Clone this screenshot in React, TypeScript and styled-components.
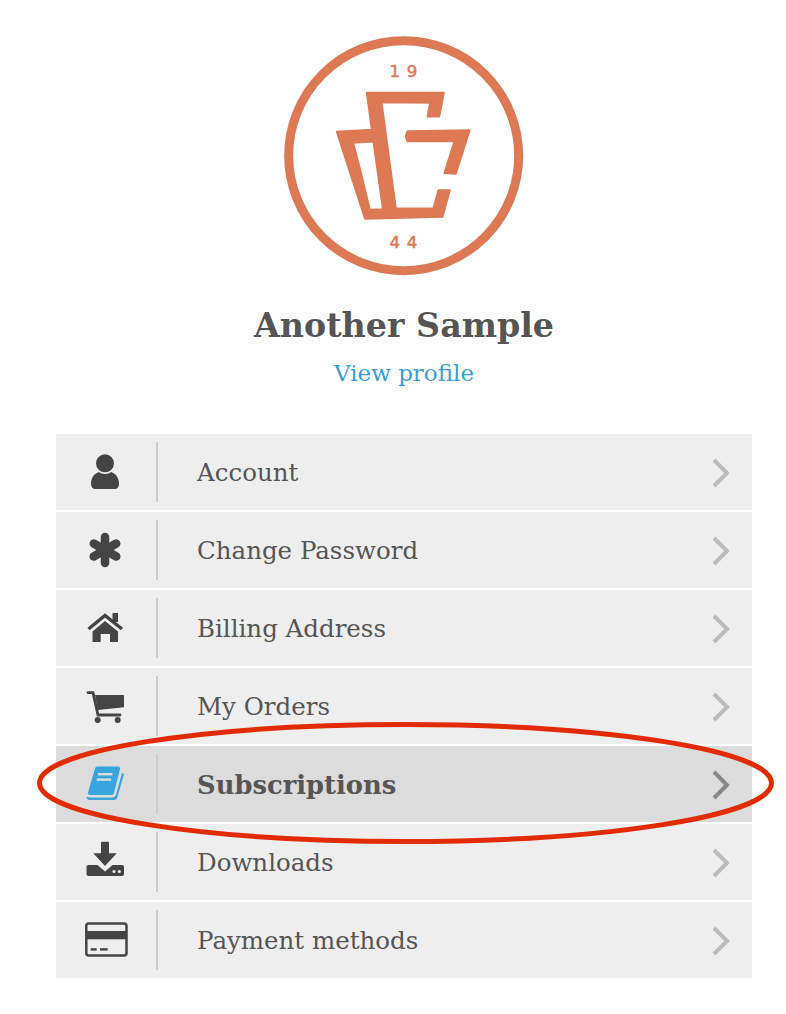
import React from 'react'
import styled, { createGlobalStyle } from 'styled-components'

const GlobalStyle = createGlobalStyle`
  html, body {
    margin: 0;
    padding: 0;
    background: #fff;
    overflow-x: hidden;
  }
`

const Page = styled.div`
  position: relative;
  width: 786px;
  height: 1014px;
  overflow: hidden;
  font-family: "DejaVu Serif", Georgia, serif;
  color: #555;
`

const Content = styled.div`
  width: 696px;
  margin-left: 56px;
  padding-top: 25px;
  display: flex;
  flex-direction: column;
  align-items: center;
`

const LogoBox = styled.svg`
  display: block;
  width: 270px;
  height: 260px;
`

const Name = styled.h1`
  margin: 18px 0 0;
  font-size: 33.3px;
  line-height: 46px;
  font-weight: 700;
  color: #555;
`

const ProfileLink = styled.a`
  margin-top: 7px;
  font-size: 23px;
  line-height: 34px;
  color: #3a9fd8;
  text-decoration: none;
`

const Menu = styled.ul`
  list-style: none;
  margin: 44px 0 0;
  padding: 0;
  width: 100%;
  display: flex;
  flex-direction: column;
  gap: 2px;
`

const Row = styled.li<{ $active?: boolean }>`
  height: 76px;
  display: flex;
  align-items: center;
  background: ${p => (p.$active ? '#dcdcdc' : '#eee')};
  padding-right: 22px;
`

const IconCell = styled.div`
  width: 100px;
  height: 60px;
  flex: none;
  display: flex;
  align-items: center;
  justify-content: center;
  border-right: 2px solid #ccc;
`

const Icon = styled.svg<{ $color?: string }>`
  width: 48px;
  height: 48px;
  display: block;
  fill: ${p => p.$color || '#444'};
`

const Label = styled.span<{ $active?: boolean }>`
  flex: 1;
  margin-left: 39px;
  padding-top: 1px;
  font-size: ${p => (p.$active ? 25.8 : 24.5)}px;
  font-weight: ${p => (p.$active ? 700 : 400)};
  color: #555;
`

const Chevron = styled.svg<{ $active?: boolean }>`
  width: 18px;
  height: 30px;
  margin-top: 2px;
  display: block;
  fill: none;
  stroke: ${p => (p.$active ? '#888' : '#bbb')};
  stroke-width: 4;
`

const Ring = styled.svg`
  position: absolute;
  left: 0;
  top: 0;
  width: 786px;
  height: 1014px;
  pointer-events: none;
`

const LogoText = styled.text`
  font-family: "DejaVu Sans", Arial, sans-serif;
  font-size: 50px;
  letter-spacing: 20px;
  stroke: #dd7954;
  stroke-width: 1.5;
  fill: #dd7954;
  text-anchor: middle;
`

const Logo = () => (
  <LogoBox viewBox="-3 0 810 780">
    <circle cx="401" cy="392" r="345" fill="none" stroke="#dd7954" strokeWidth="27" />
    <path
      fill="#dd7954"
      stroke="#dd7954"
      strokeWidth="5"
      strokeLinejoin="round"
      fillRule="evenodd"
      d="M290 203 L522 203 L508 275 L472 275 L480 234 L335 232 L378 550 L490 550 L505 495 L540 495 L518 576 L285 582 L200 320 L305 314 Z M250 354 L310 350 L338 552 L300 554 L270 430 Z"
    />
    <path
      fill="#dd7954"
      stroke="#dd7954"
      strokeWidth="4"
      strokeLinejoin="round"
      d="M412 318 L600 315 L558 447 L522 445 L552 350 L412 350 Q402 334 412 318 Z"
    />
    <LogoText x="410" y="155">19</LogoText>
    <LogoText x="410" y="670">44</LogoText>
  </LogoBox>
)

const UserIcon = () => (
  <Icon viewBox="0 0 48 48">
    <circle cx="23" cy="15.3" r="9" />
    <path d="M9 36C9 30 12 25.5 17 24C19 26.5 27 26.5 29 24C34 25.5 37 30 37 36C37 39 35 41 33 41H13C11 41 9 39 9 36Z" />
  </Icon>
)

const AsteriskIcon = () => (
  <Icon viewBox="0 0 48 48">
    <g stroke="#444" strokeWidth="8.5" strokeLinecap="round">
      <path d="M23 11V37" />
      <path d="M23 11V37" transform="rotate(60 23 24)" />
      <path d="M23 11V37" transform="rotate(-60 23 24)" />
    </g>
  </Icon>
)

const HomeIcon = () => (
  <Icon viewBox="0 0 48 48">
    <path d="M6.5 25L23 11.5L40 25" fill="none" stroke="#444" strokeWidth="3.4" />
    <rect x="30.5" y="9" width="5.5" height="9" />
    <path d="M10.5 27.5L23 17L36 27.5V38H28V30H18.7V38H10.5Z" />
  </Icon>
)

const CartIcon = () => (
  <Icon viewBox="0 0 48 48">
    <path d="M6 10.7H11L16 33H38" fill="none" stroke="#444" strokeWidth="2.8" strokeLinecap="round" />
    <path d="M13 13H41C41.6 13 42 13.4 42 14V25.3L15.8 28Z" />
    <circle cx="15.7" cy="38" r="3" />
    <circle cx="35.7" cy="38" r="3" />
  </Icon>
)

const BookIcon = () => (
  <Icon viewBox="0 0 48 48" $color="#39a4dc">
    <path d="M15.5 6.5H36C37.6 6.5 38.4 7.6 38 9L32 33C31.6 34.4 30.6 35 29 35H8C6.4 35 5.6 33.9 6 32.5L13 8.5C13.4 7.2 14.2 6.5 15.5 6.5Z" />
    <path d="M42 14L35.5 37C35 38.8 33.8 40 32 40H7.5C5.8 40 4.6 39 4.4 36.8C5.4 37.3 6.6 37.4 8 37.4H30.5C32.4 37.4 33.4 36.4 34 34.8L40 13Z" />
    <rect x="16" y="13" width="14.5" height="2.4" fill="#dcdcdc" />
    <rect x="14.7" y="18.4" width="14.5" height="2.4" fill="#dcdcdc" />
  </Icon>
)

const DownloadIcon = () => (
  <Icon viewBox="0 0 48 48">
    <path d="M19 5C19 4.2 19.6 3.7 20.4 3.7H25.6C26.4 3.7 27 4.2 27 5V15.3H34.7L23 28L11.3 15.3H19Z" />
    <path d="M6.5 27H15.5L23 33.5L30.5 27H40C41.2 27 42 27.8 42 29V36C42 37.2 41.2 38 40 38H6.5C5.3 38 4.5 37.2 4.5 36V29C4.5 27.8 5.3 27 6.5 27Z" />
    <circle cx="32" cy="33.5" r="1.5" fill="#eee" />
    <circle cx="37.3" cy="33.5" r="1.5" fill="#eee" />
  </Icon>
)

const CardIcon = () => (
  <Icon viewBox="0 0 48 48">
    <rect x="4.3" y="7.5" width="40.2" height="32" rx="2.5" fill="none" stroke="#444" strokeWidth="2.5" />
    <rect x="4" y="15" width="41" height="8.3" />
    <rect x="8.7" y="32.2" width="6" height="2.4" />
    <rect x="18" y="32.2" width="7.7" height="2.4" />
  </Icon>
)

const items = [
  { label: 'Account', icon: <UserIcon /> },
  { label: 'Change Password', icon: <AsteriskIcon /> },
  { label: 'Billing Address', icon: <HomeIcon /> },
  { label: 'My Orders', icon: <CartIcon /> },
  { label: 'Subscriptions', icon: <BookIcon />, active: true },
  { label: 'Downloads', icon: <DownloadIcon /> },
  { label: 'Payment methods', icon: <CardIcon /> },
]

function App() {
  return (
    <Page>
      <GlobalStyle />
      <Content>
        <Logo />
        <Name>Another Sample</Name>
        <ProfileLink href="#">View profile</ProfileLink>
        <Menu>
          {items.map(item => (
            <Row key={item.label} $active={item.active}>
              <IconCell>{item.icon}</IconCell>
              <Label $active={item.active}>{item.label}</Label>
              <Chevron viewBox="0 0 18 30" $active={item.active}>
                <polyline points="2,2 15,15 2,28" />
              </Chevron>
            </Row>
          ))}
        </Menu>
      </Content>
      <Ring viewBox="0 0 786 1014">
        <ellipse cx="405.5" cy="783" rx="366" ry="58.5" fill="none" stroke="#e22b00" strokeWidth="5" />
      </Ring>
    </Page>
  )
}

export default App
